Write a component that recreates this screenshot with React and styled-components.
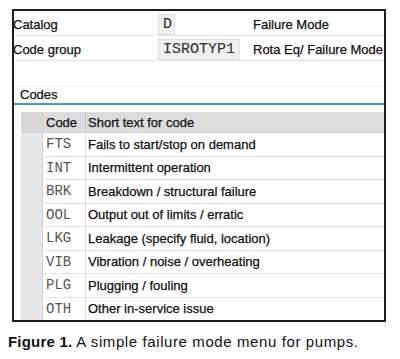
import React from 'react';
import styled, { createGlobalStyle } from 'styled-components';

const GlobalStyle = createGlobalStyle`
  body {
    margin: 0;
    background: #fff;
  }
`;

const Page = styled.div`
  width: 400px;
  height: 359px;
  padding-top: 9px;
  box-sizing: border-box;
  overflow: hidden;
`;

const Frame = styled.div`
  margin-left: 12px;
  width: 374px;
  height: 313px;
  box-sizing: border-box;
  border: 2px solid #1e1e1e;
  background: #fff;
  overflow: hidden;
  font-family: 'Liberation Sans', Arial, sans-serif;
  font-size: 13px;
  color: #111;
  -webkit-text-stroke: 0.25px #111;
`;

const FieldRow = styled.div`
  display: grid;
  grid-template-columns: 144px 95px 1fr;
  height: 25px;
  box-sizing: border-box;
  padding-top: 2px;
  align-items: center;
  border-bottom: 1px solid #e6e6e6;
  white-space: nowrap;
`;

const Label = styled.div`
  margin-left: -1px;
`;

const Field = styled.div`
  width: ${(p) => p.$width}px;
  height: 21px;
  box-sizing: border-box;
  background: #f0f0f0;
  border: 1px solid #dedede;
  font-family: 'Liberation Mono', 'Courier New', monospace;
  font-size: 15px;
  color: #333;
  -webkit-text-stroke: 0.1px #333;
  line-height: 20px;
  padding-left: 4px;
`;

const FieldText = styled.div`
  overflow: hidden;
`;

const Blank = styled.div`
  height: 26px;
  box-sizing: border-box;
  border-bottom: 1px solid #f0f0f0;
`;

const SectionTitle = styled.div`
  height: 16px;
  padding-left: 6px;
  line-height: 16px;
  border-bottom: 2px solid #3c9fd6;
`;

const Table = styled.div`
  margin-top: 7px;
  margin-left: 7px;
`;

const Row = styled.div`
  display: grid;
  grid-template-columns: 22px 43px 1fr;
  height: ${(p) => (p.$head ? 21 : 23.5)}px;
  box-sizing: border-box;
  border-bottom: 1px solid ${(p) => (p.$head ? '#d4d4d4' : '#e4e4e4')};
  background: ${(p) => (p.$head ? '#dcdcdc' : '#fff')};
  white-space: nowrap;
`;

const Selector = styled.div`
  background: ${(p) => (p.$head ? '#d8d8d8' : '#e6e6e6')};
  border-right: 1px solid #cfcfcf;
`;

const CodeCell = styled.div`
  display: flex;
  align-items: center;
  padding-left: 3px;
  border-right: 1px solid ${(p) => (p.$head ? '#c8c8c8' : '#e2e2e2')};
  font-family: ${(p) =>
    p.$head ? "'Liberation Sans', Arial, sans-serif" : "'Liberation Mono', 'Courier New', monospace"};
  font-size: ${(p) => (p.$head ? 13 : 14)}px;
  color: ${(p) => (p.$head ? '#111' : '#555')};
  -webkit-text-stroke: ${(p) => (p.$head ? '0.25px #111' : '0')};
`;

const TextCell = styled.div`
  display: flex;
  align-items: center;
  padding-left: 2px;
`;

const Caption = styled.div`
  margin: 11px 0 0 8px;
  font-family: 'Liberation Sans', Arial, sans-serif;
  font-size: 15px;
  letter-spacing: 0.6px;
  color: #111;
  white-space: nowrap;
  b {
    font-weight: bold;
    letter-spacing: 0.2px;
  }
`;

const codes = [
  ['FTS', 'Fails to start/stop on demand'],
  ['INT', 'Intermittent operation'],
  ['BRK', 'Breakdown / structural failure'],
  ['OOL', 'Output out of limits / erratic'],
  ['LKG', 'Leakage (specify fluid, location)'],
  ['VIB', 'Vibration / noise / overheating'],
  ['PLG', 'Plugging / fouling'],
  ['OTH', 'Other in-service issue'],
];

export default function App() {
  return (
    <Page>
      <GlobalStyle />
      <Frame>
        <FieldRow>
          <Label>Catalog</Label>
          <div>
            <Field $width={17}>D</Field>
          </div>
          <FieldText>Failure Mode</FieldText>
        </FieldRow>
        <FieldRow>
          <Label>Code group</Label>
          <div>
            <Field $width={82}>ISROTYP1</Field>
          </div>
          <FieldText>Rota Eq/ Failure Mode</FieldText>
        </FieldRow>
        <Blank />
        <SectionTitle>Codes</SectionTitle>
        <Table>
          <Row $head>
            <Selector $head />
            <CodeCell $head>Code</CodeCell>
            <TextCell>Short text for code</TextCell>
          </Row>
          {codes.map(([code, text]) => (
            <Row key={code}>
              <Selector />
              <CodeCell>{code}</CodeCell>
              <TextCell>{text}</TextCell>
            </Row>
          ))}
        </Table>
      </Frame>
      <Caption>
        <b>Figure 1.</b> A simple failure mode menu for pumps.
      </Caption>
    </Page>
  );
}
